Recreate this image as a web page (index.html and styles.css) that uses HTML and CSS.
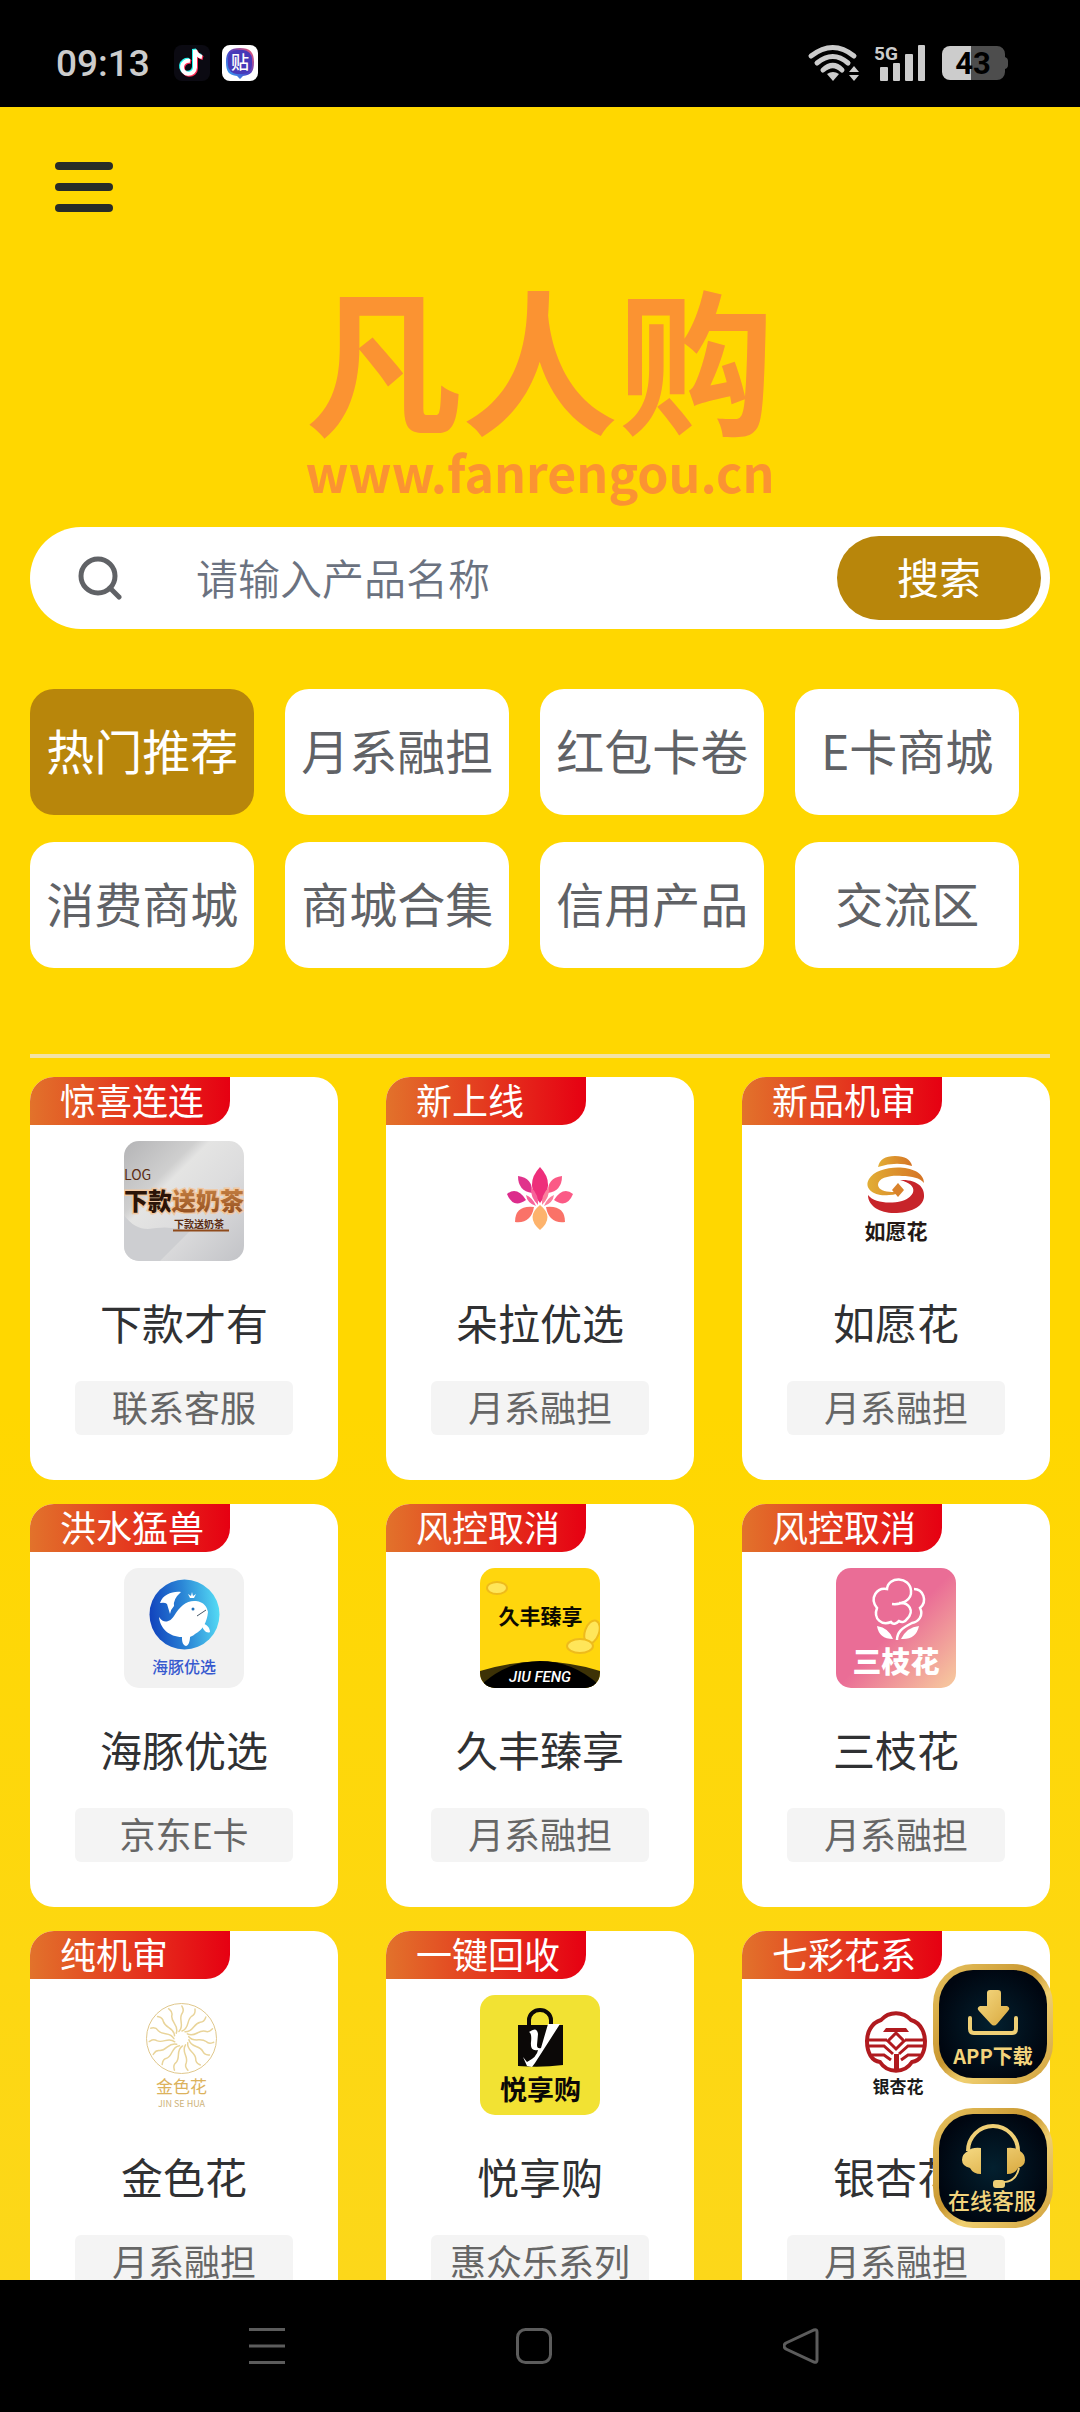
FILE: index.html
```html
<!DOCTYPE html>
<html lang="zh-CN">
<head>
    <meta charset="UTF-8">
    <meta name="viewport" content="width=device-width, initial-scale=1.0">
    <title>凡人购</title>
    <link rel="stylesheet" href="styles.css">
</head>
<body>
    <div class="status-bar">
        <span class="time">09:13</span>
        <svg class="app-icon" viewBox="0 0 36 36">
            <rect width="36" height="36" rx="8" fill="#0b0a12"/>
            <g fill="none" stroke-width="4">
                <path d="M16 16a6.500 6.500 0 1 0 5 6.500V5c1 4 3 6 7 7" stroke="#25f4ee" transform="translate(-1 -1)"/>
                <path d="M16 16a6.500 6.500 0 1 0 5 6.500V5c1 4 3 6 7 7" stroke="#fe2c55" transform="translate(1 1)"/>
                <path d="M16 16a6.500 6.500 0 1 0 5 6.500V5c1 4 3 6 7 7" stroke="#fff"/>
            </g>
        </svg>
        <svg class="app-icon" viewBox="0 0 36 36">
            <defs>
                <linearGradient id="tie" x1="0" y1="1" x2="1" y2="0">
                    <stop offset="0" stop-color="#35b8ff"/>
                    <stop offset=".5" stop-color="#4a3fc4"/>
                    <stop offset="1" stop-color="#ff5a6a"/>
                </linearGradient>
            </defs>
            <rect width="36" height="36" rx="8" fill="#fff"/>
            <path d="M18 3c10 0 14 4 14 14s-3 13-11 14l-3 3-3-3C7 30 4 27 4 17S8 3 18 3z" fill="url(#tie)"/>
            <rect x="6" y="5" width="24" height="24" rx="9" fill="#4739b8"/>
            <text x="18" y="24" font-size="18" font-weight="500" fill="#fff" text-anchor="middle">贴</text>
        </svg>
        <div class="signals">
            <svg width="52" height="36" viewBox="0 0 52 36">
                <g fill="none" stroke="#ccc" stroke-width="5" stroke-linecap="round">
                    <path d="M3 11Q25-6 46 11"/>
                    <path d="M9 18Q25 5 40 18"/>
                    <path d="M15 25Q25 16 34 25"/>
                </g>
                <path d="M19 29q6-4 12 0l-6 7z" fill="#ccc"/>
                <path d="M41 27l5-6 5 6zM41 30l5 6 5-6z" fill="#ccc"/>
            </svg>
            <svg width="54" height="38" viewBox="0 0 54 38" fill="#ccc">
                <text class="net" x="0" y="16" font-size="19" font-weight="700">5G</text>
                <rect x="6" y="23" width="8" height="14" rx="1"/>
                <rect x="19" y="19" width="7" height="18" rx="1"/>
                <rect x="31" y="10" width="8" height="27" rx="1"/>
                <rect x="44" y="1" width="7" height="36" rx="1"/>
            </svg>
            <svg width="66" height="34" viewBox="0 0 66 34">
                <path d="M8 0h22v34H8a8 8 0 0 1-8-8V8a8 8 0 0 1 8-8z" fill="#ccc"/>
                <path d="M29 0h26a8 8 0 0 1 8 8v3q3 1 3 4v4q0 3-3 4v3a8 8 0 0 1-8 8H29z" fill="#4d4d4d"/>
                <text class="net" x="31" y="28" font-size="31" font-weight="700" text-anchor="middle">43</text>
            </svg>
        </div>
    </div>

    <main class="page">
        <header>
            <button class="menu" aria-label="菜单"><i></i><i></i><i></i></button>
            <div class="brand">
                <h1>凡人购</h1>
                <p>www.fanrengou.cn</p>
            </div>
        </header>

        <form class="search">
            <svg class="search-icon" viewBox="0 0 44 44" fill="none" stroke="#606266" stroke-width="5" stroke-linecap="round">
                <circle cx="20" cy="20" r="17"/>
                <path d="M32 32l9 9"/>
            </svg>
            <input type="text" placeholder="请输入产品名称" aria-label="请输入产品名称">
            <button type="button">搜索</button>
        </form>

        <nav class="tabs">
            <button class="active">热门推荐</button>
            <button>月系融担</button>
            <button>红包卡卷</button>
            <button>E卡商城</button>
            <button>消费商城</button>
            <button>商城合集</button>
            <button>信用产品</button>
            <button>交流区</button>
        </nav>

        <hr class="line">

        <div class="cards">
            <a class="card" href="#">
                <span class="ribbon">惊喜连连</span>
                <svg class="logo" viewBox="0 0 120 120">
                    <defs>
                        <linearGradient id="wall" x1="0" y1="0" x2="1" y2="1">
                            <stop offset="0" stop-color="#b4b4b6"/>
                            <stop offset=".3" stop-color="#cfcfcf"/>
                            <stop offset=".36" stop-color="#e4e4e3"/>
                            <stop offset=".6" stop-color="#dcdcdd"/>
                            <stop offset="1" stop-color="#c2c3c7"/>
                        </linearGradient>
                        <linearGradient id="wood" x1="0" y1="0" x2="0" y2="1">
                            <stop offset="0" stop-color="#cf8a4a"/>
                            <stop offset="1" stop-color="#8f4a1b"/>
                        </linearGradient>
                    </defs>
                    <rect width="120" height="120" fill="url(#wall)"/>
                    <path d="M0 74Q10 88 24 88 45 84 66 90L36 120H0z" fill="#cdced1"/>
                    <text x="0" y="39" font-size="14" fill="#5a2c12">LOG</text>
                    <text class="glow" x="0" y="69" font-size="24" font-weight="900" fill="#2b1408">下款<tspan fill="url(#wood)">送奶茶</tspan></text>
                    <text x="50" y="87" font-size="10" font-weight="700" fill="#5a2c12">下款送奶茶</text>
                    <path d="M49 89.500h56" stroke="#8f4a1b" stroke-width="2"/>
                </svg>
                <span class="name">下款才有</span>
                <span class="tag">联系客服</span>
            </a>

            <a class="card" href="#">
                <span class="ribbon">新上线</span>
                <svg class="logo" viewBox="0 0 120 120">
                    <path d="M60 26q16 17 0 36q-16-19 0-36z" fill="#ee2f7b"/>
                    <path d="M38 35q15 2 14 17q-14-2-14-17z" fill="#e0338c"/>
                    <path d="M82 35q-15 2-14 17q14-2 14-17z" fill="#fb5a86"/>
                    <path d="M27 53q10-8 19 6q-13 9-19-6z" fill="#dc2c8c"/>
                    <path d="M93 53q-10-8-19 6q13 9 19-6z" fill="#fb5a86"/>
                    <path d="M51 46q8 8 7 18q-8-8-7-18zM46 54q7 3 10 11q-9-3-10-11z" fill="#f7639a"/>
                    <path d="M69 46q-8 8-7 18q8-8 7-18zM74 54q-7 3-10 11q9-3 10-11z" fill="#fb7f9c"/>
                    <path d="M35 81q0-17 19-15q-3 17-19 15z" fill="#fa7268"/>
                    <path d="M85 81q0-17-19-15q3 17 19 15z" fill="#fa7268"/>
                    <path d="M60 64q15 12 0 25q-15-13 0-25z" fill="#fdb36c"/>
                </svg>
                <span class="name">朵拉优选</span>
                <span class="tag">月系融担</span>
            </a>

            <a class="card" href="#">
                <span class="ribbon">新品机审</span>
                <svg class="logo" viewBox="0 0 120 120">
                    <defs>
                        <linearGradient id="ruyi" x1="0" y1="0" x2="1" y2="0">
                            <stop offset="0" stop-color="#e2ae35"/>
                            <stop offset="1" stop-color="#d57324"/>
                        </linearGradient>
                    </defs>
                    <path d="M42 26q2-11 17-11t17 10q-16-5-34 1z" fill="url(#ruyi)"/>
                    <path d="M88 42C88 22 42 22 33 38c-6 10 6 18 20 16 6 0 10-2 13-4-12 2-23 1-24-6 0-8 14-10 24-9 10 0 18 2 22 7z" fill="url(#ruyi)"/>
                    <path d="M32 54c6 8 22 9 34 6 13-4 18-16-2-21 18-1 25 8 24 17-1 10-14 16-30 16-14 0-26-7-26-18z" fill="#c7242a"/>
                    <path d="M62 42l6 7-6 7-6-7z" fill="#d9822b"/>
                    <text x="60" y="98" font-size="21" font-weight="700" fill="#231815" text-anchor="middle">如愿花</text>
                </svg>
                <span class="name">如愿花</span>
                <span class="tag">月系融担</span>
            </a>

            <a class="card" href="#">
                <span class="ribbon">洪水猛兽</span>
                <svg class="logo" viewBox="0 0 120 120">
                    <defs>
                        <linearGradient id="sea" x1="0" y1=".5" x2="1" y2=".4">
                            <stop offset="0" stop-color="#1143bd"/>
                            <stop offset=".5" stop-color="#2b86d6"/>
                            <stop offset="1" stop-color="#55dcf5"/>
                        </linearGradient>
                    </defs>
                    <rect width="120" height="120" fill="#f1f1f1"/>
                    <circle cx="60.500" cy="46.500" r="35" fill="url(#sea)"/>
                    <path d="M35 49c5 8 12 4 15-1 6-10 13-16 22-15 8 1 11 6 12 11-1 10-5 18-13 22-2 2-4 2-5 3 0 5-2 9-4 9-4-1-4-6-4-9-13 0-22-9-23-20z" fill="#fff"/>
                    <path d="M57 24c-8-1-18 2-21 11q5-1 7 1l3 10q1-5 4-8-1-7 7-14z" fill="#fff"/>
                    <path d="M78 56c3-1 8 3 8 8-3 2-8-2-8-8zM66 30l-2-4 3 2 1-4 1 4 3-2-2 4z" fill="#fff"/>
                    <circle cx="69" cy="41" r="1.500" fill="#1f6fb8"/>
                    <path d="M73 48l9-6" stroke="#456" stroke-width="1"/>
                    <text x="60" y="105" font-size="16" font-weight="500" fill="#3759cf" text-anchor="middle">海豚优选</text>
                </svg>
                <span class="name">海豚优选</span>
                <span class="tag">京东E卡</span>
            </a>

            <a class="card" href="#">
                <span class="ribbon">风控取消</span>
                <svg class="logo" viewBox="0 0 120 120">
                    <rect width="120" height="120" fill="#ffd60d"/>
                    <g fill="#ffe65a" stroke="#eebb1c" stroke-width="2">
                        <ellipse cx="17" cy="20" rx="10" ry="6"/>
                        <ellipse cx="112" cy="64" rx="7" ry="12" transform="rotate(20 112 64)"/>
                        <ellipse cx="100" cy="78" rx="13" ry="7"/>
                    </g>
                    <path d="M0 103Q60 84 120 103v17H0z" fill="#3d3206"/>
                    <path d="M2 116Q28 93 60 93t58 23v4H2z" fill="#000"/>
                    <text x="60.500" y="56" font-size="21" font-weight="700" fill="#0d0a00" text-anchor="middle">久丰臻享</text>
                    <text class="net" x="60" y="114" font-size="15" font-weight="500" font-style="italic" fill="#fff" text-anchor="middle">JIU FENG</text>
                </svg>
                <span class="name">久丰臻享</span>
                <span class="tag">月系融担</span>
            </a>

            <a class="card" href="#">
                <span class="ribbon">风控取消</span>
                <svg class="logo" viewBox="0 0 120 120">
                    <defs>
                        <linearGradient id="pink" x1="0" y1="0" x2="1" y2="1">
                            <stop offset=".5" stop-color="#ea6d96"/>
                            <stop offset=".95" stop-color="#f6c39d"/>
                        </linearGradient>
                    </defs>
                    <rect width="120" height="120" fill="url(#pink)"/>
                    <g fill="none" stroke="#fff" stroke-width="2.500">
                        <path d="M56 36c10 1 20-4 19-13-1-15-23-15-24-2-10-2-18 9-10 19-4 11 5 18 14 14 2 3 5 2 8-1 3 2 6 1 8-2 8-8 2-17-8-16"/>
                        <path d="M78 21c9 0 14 12 6 19 4 8-2 14-8 15-10 5-15 9-15 17"/>
                    </g>
                    <path d="M41 58q12 2 16 13-14 0-16-13zM83 58q-12 1-18 13 15 1 18-13z" fill="#fff"/>
                    <text x="60" y="105" font-size="29" font-weight="900" fill="#fff" text-anchor="middle">三枝花</text>
                </svg>
                <span class="name">三枝花</span>
                <span class="tag">月系融担</span>
            </a>

            <a class="card" href="#">
                <span class="ribbon">纯机审</span>
                <svg class="logo" viewBox="0 0 120 120">
                    <defs>
                        <path id="ray" d="M58 36C66 33 62 25 68 21 72 19 71 16 71 14"/>
                    </defs>
                    <circle cx="57.500" cy="43.500" r="35" fill="none" stroke="#dfc78c" stroke-width="1"/>
                    <g fill="none" stroke="#e9d49a" stroke-width="1.500" stroke-linecap="round">
                        <use href="#ray"/>
                        <use href="#ray" transform="rotate(24 57.500 43.500)"/>
                        <use href="#ray" transform="rotate(48 57.500 43.500)"/>
                        <use href="#ray" transform="rotate(72 57.500 43.500)"/>
                        <use href="#ray" transform="rotate(96 57.500 43.500)"/>
                        <use href="#ray" transform="rotate(120 57.500 43.500)"/>
                        <use href="#ray" transform="rotate(144 57.500 43.500)"/>
                        <use href="#ray" transform="rotate(168 57.500 43.500)"/>
                        <use href="#ray" transform="rotate(192 57.500 43.500)"/>
                        <use href="#ray" transform="rotate(216 57.500 43.500)"/>
                        <use href="#ray" transform="rotate(240 57.500 43.500)"/>
                        <use href="#ray" transform="rotate(264 57.500 43.500)"/>
                        <use href="#ray" transform="rotate(288 57.500 43.500)"/>
                        <use href="#ray" transform="rotate(312 57.500 43.500)"/>
                        <use href="#ray" transform="rotate(336 57.500 43.500)"/>
                    </g>
                    <text x="57.500" y="98" font-size="17" fill="#dcb25c" text-anchor="middle">金色花</text>
                    <text x="57.500" y="112" font-size="9" fill="#cdb27a" text-anchor="middle">JIN SE HUA</text>
                </svg>
                <span class="name">金色花</span>
                <span class="tag">月系融担</span>
            </a>

            <a class="card" href="#">
                <span class="ribbon">一键回收</span>
                <svg class="logo" viewBox="0 0 120 120">
                    <rect width="120" height="120" fill="#f2e233"/>
                    <path d="M49 31v-6a11 10 0 0 1 22 0v6" fill="none" stroke="#0b0807" stroke-width="4"/>
                    <path d="M38 30h45v40q-22 3-45 1z" fill="#0b0807"/>
                    <path d="M49 37q8-6 9 2l-1 11q0 4 4 3l7-24h12L55 68l-3 4-5-1-4-9 4 5q10-5 11-12-8 2-7-8 1-9-2-10z" fill="#fff"/>
                    <text x="60.500" y="105" font-size="27" font-weight="700" fill="#0b0807" text-anchor="middle">悦享购</text>
                </svg>
                <span class="name">悦享购</span>
                <span class="tag">惠众乐系列</span>
            </a>

            <a class="card" href="#">
                <span class="ribbon">七彩花系</span>
                <svg class="logo" viewBox="0 0 120 120">
                    <path d="M45 25A20 20 0 0 1 75 25C86 28 89 40 89 46 89 58 84 66 76 67A19 19 0 0 1 44 67C36 66 31 58 31 46 31 38 35 28 45 25z" fill="none" stroke="#b01a1f" stroke-width="4"/>
                    <g fill="none" stroke="#b01a1f" stroke-width="3">
                        <path d="M60 38l8 8-8 8-8-8z"/>
                        <path d="M31 45h20M69 45h20M33 51h15l9 8M87 51H72l-9 8M36 60h12l7 5M84 60H72l-7 5"/>
                    </g>
                    <path d="M50 33h20l3 4H47zM58 59h5v18h-5z" fill="#b01a1f"/>
                    <text x="62" y="98" font-size="17" font-weight="700" fill="#1a1a1a" text-anchor="middle">银杏花</text>
                </svg>
                <span class="name">银杏花</span>
                <span class="tag">月系融担</span>
            </a>
        </div>

        <div class="floats">
            <button aria-label="APP下载">
                <svg viewBox="0 0 108 108">
                    <defs>
                        <linearGradient id="gold" x1="0" y1="0" x2="1" y2="1">
                            <stop offset="0" stop-color="#f5d982"/>
                            <stop offset="1" stop-color="#d9a93f"/>
                        </linearGradient>
                    </defs>
                    <path d="M51 20h8q3 0 3 3v13h6q4 2 1 5L58 54q-3 3-6 0L40 41q-3-3 1-5h7V23q0-3 3-3z" fill="url(#gold)"/>
                    <path d="M31 48v11q0 4 4 4h38q4 0 4-4V48" fill="none" stroke="#efcf75" stroke-width="4" stroke-linecap="round"/>
                    <text x="54" y="94" font-size="20" font-weight="700" fill="#f3d47c" text-anchor="middle">APP下载</text>
                </svg>
            </button>
            <button aria-label="在线客服">
                <svg viewBox="0 0 108 108">
                    <path d="M29 37a25 25 0 0 1 50 0" fill="none" stroke="#efcf75" stroke-width="4"/>
                    <path d="M42 34v26q-8 0-11-6-8-2-8-8t6-9q4-4 13-3zM68 34v26q8 0 11-6 7-2 7-8t-5-9q-4-4-13-3z" fill="url(#gold)"/>
                    <path d="M80 54q-3 14-16 14" fill="none" stroke="#efcf75" stroke-width="2"/>
                    <rect x="54" y="66" width="12" height="8" rx="3" fill="#efcf75"/>
                    <text x="53" y="95" font-size="22" font-weight="500" fill="#f3d47c" text-anchor="middle">在线客服</text>
                </svg>
            </button>
        </div>
    </main>

    <nav class="nav-bar">
        <button aria-label="最近任务">
            <svg viewBox="0 0 36 36"><path d="M0 1.500h36M0 18h36M0 34.500h36"/></svg>
        </button>
        <button aria-label="主页">
            <svg viewBox="0 0 36 36"><rect x="1.500" y="1.500" width="33" height="33" rx="8"/></svg>
        </button>
        <button aria-label="返回">
            <svg viewBox="0 0 36 36"><path d="M3 15L31 2q3-1 3 2v28q0 3-3 2L3 21q-4-3 0-6z"/></svg>
        </button>
    </nav>
</body>
</html>
```
FILE: styles.css
```css
* {
    box-sizing: border-box;
}

body {
    margin: 0;
    height: 100vh;
    display: flex;
    flex-direction: column;
    background-color: #000;
    font-family: "Noto Sans CJK SC", sans-serif;
    color: #303133;
}

button {
    border: 0;
    padding: 0;
    background: none;
    font-family: inherit;
    cursor: pointer;
}

/* barra de estado */
.status-bar {
    display: flex;
    align-items: center;
    height: 107px;
    padding: 19px 72px 0 56px;
    flex-shrink: 0;
}

.status-bar svg {
    overflow: visible;
}

.time {
    margin-right: 24px;
    font-family: Roboto, sans-serif;
    font-size: 37px;
    font-weight: 500;
    color: #ccc;
}

.app-icon {
    width: 36px;
    height: 36px;
    margin-right: 12px;
}

.signals {
    display: flex;
    align-items: center;
    gap: 14px;
    margin-left: auto;
}

.net {
    font-family: Roboto, sans-serif;
}

.glow {
    paint-order: stroke;
    stroke: #f0c8a2;
    stroke-width: 3px;
}

/* contenido */
.page {
    position: relative;
    flex: 1;
    min-height: 0;
    overflow: hidden;
    padding: 55px 30px 0;
    background: linear-gradient(#ffd700 60%, #fcd71a);
}

.menu {
    display: flex;
    flex-direction: column;
    justify-content: space-between;
    width: 58px;
    height: 50px;
    margin-left: 25px;
}

.menu i {
    height: 8px;
    border-radius: 4px;
    background-color: #282c28;
}

.brand {
    margin-top: 65px;
    text-align: center;
    color: #fb9332;
}

.brand h1 {
    margin: 0;
    font-size: 156px;
    font-weight: 700;
    line-height: 156px;
}

.brand p {
    margin: 8px 0 0;
    font-size: 50px;
    font-weight: 700;
    line-height: 60px;
}

.search {
    display: flex;
    align-items: center;
    height: 102px;
    margin-top: 26px;
    padding: 0 9px 0 48px;
    border-radius: 51px;
    background-color: #fff;
}

.search-icon {
    width: 44px;
    height: 44px;
    flex-shrink: 0;
}

.search input {
    flex: 1;
    min-width: 0;
    margin-left: 74px;
    padding: 0 0 4px;
    border: 0;
    outline: 0;
    font-family: inherit;
    font-size: 42px;
    font-weight: 350;
    color: #303133;
}

.search input::placeholder {
    color: #6b7280;
}

.search button {
    width: 204px;
    height: 84px;
    padding-bottom: 6px;
    border-radius: 42px;
    background-color: #b8860b;
    font-size: 42px;
    color: #fff;
}

.tabs {
    display: flex;
    flex-wrap: wrap;
    gap: 27px 3%;
    margin-top: 60px;
}

.tabs button {
    width: 22%;
    height: 126px;
    padding-bottom: 6px;
    border-radius: 24px;
    background-color: #fff;
    font-size: 48px;
    color: #606266;
}

.tabs .active {
    background-color: #b8860b;
    color: #fff;
}

.line {
    height: 4px;
    margin: 86px 0 19px;
    border: 0;
    background-color: #f2e2a6;
}

.cards {
    display: grid;
    grid-template-columns: repeat(3, 1fr);
    gap: 24px 48px;
}

.card {
    display: flex;
    flex-direction: column;
    align-items: center;
    padding-bottom: 45px;
    border-radius: 24px;
    background-color: #fff;
    overflow: hidden;
    color: #303133;
    text-decoration: none;
}

.ribbon {
    align-self: flex-start;
    width: 200px;
    height: 48px;
    padding-left: 30px;
    border-bottom-right-radius: 24px;
    background: linear-gradient(to right, #e2722b, #e60012);
    font-size: 36px;
    line-height: 44px;
    color: #fff;
}

.logo {
    width: 120px;
    height: 120px;
    margin-top: 16px;
    border-radius: 15px;
}

.name {
    margin-top: 31px;
    font-size: 42px;
    line-height: 60px;
}

.tag {
    width: 218px;
    margin-top: 29px;
    padding-bottom: 4px;
    border-radius: 6px;
    background-color: #f4f4f4;
    font-size: 36px;
    line-height: 50px;
    text-align: center;
    color: #666;
}

/* botones flotantes sobre las tarjetas */
.floats {
    position: absolute;
    right: 27px;
    bottom: 52px;
    display: flex;
    flex-direction: column;
    gap: 24px;
}

.floats button {
    width: 120px;
    height: 120px;
    padding: 6px;
    border-radius: 40px;
    background: linear-gradient(135deg, #e9c562, #c8962f 45%, #f0cf70 60%, #cf9f3a);
}

.floats svg {
    display: block;
    width: 100%;
    border-radius: 34px;
    background: radial-gradient(#03202f, #000610 75%);
}

.nav-bar {
    display: grid;
    grid-template-columns: repeat(3, 1fr);
    align-items: center;
    height: 132px;
    padding: 0 146px 0 133px;
    flex-shrink: 0;
}

.nav-bar svg {
    display: block;
    width: 36px;
    height: 36px;
    margin: 0 auto;
    fill: none;
    stroke: #5c5c5c;
    stroke-width: 3;
}
```
